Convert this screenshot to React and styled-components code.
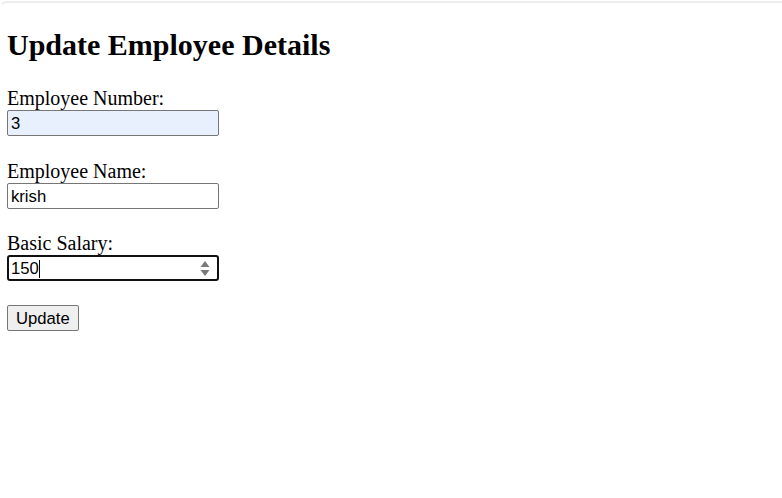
import React from "react";
import styled, { createGlobalStyle } from "styled-components";

const Global = createGlobalStyle`
  html, body { margin: 0; padding: 0; background: #ffffff; }
  body { font-family: "Liberation Serif", "Times New Roman", serif; color: #000; }
`;

const Frame = styled.div`
  margin-top: 1px;
  min-height: 497px;
  box-sizing: border-box;
  border-top: 2px solid #ececec;
  border-left: 1px solid #ffffff;
  border-top-left-radius: 7px;
  padding: 0 0 0 6px;
`;

const Title = styled.h2`
  margin: 25px 0 25px;
  font-size: 30px;
  line-height: 34px;
  font-weight: bold;
`;

const Form = styled.form`
  display: flex;
  flex-direction: column;
  align-items: flex-start;
`;

const Field = styled.div`
  display: flex;
  flex-direction: column;
  align-items: flex-start;
  margin-bottom: 23.5px;
`;

const Label = styled.label`
  font-size: 20px;
  line-height: 23px;
`;

const InputWrap = styled.div`
  position: relative;
  width: 212px;
  height: 26px;
`;

const Input = styled.input`
  box-sizing: border-box;
  width: 212px;
  height: 26px;
  margin: 0;
  padding: 2px 3px 0;
  font-family: "Liberation Sans", Arial, sans-serif;
  font-size: 16.67px;
  color: #000;
  background: ${(p) => (p.$autofill ? "#e8f0fe" : "#ffffff")};
  border: ${(p) => (p.$focused ? "2px solid #101010" : "1px solid #767676")};
  padding-left: ${(p) => (p.$focused ? "2px" : "3px")};
  border-radius: ${(p) => (p.$focused ? "3px" : "2px")};
  outline: none;
`;

const Caret = styled.span`
  position: absolute;
  left: 32px;
  top: 5px;
  width: 1px;
  height: 18px;
  background: #000;
`;

const Spinner = styled.svg`
  position: absolute;
  right: 9px;
  top: 6px;
`;

const Button = styled.button`
  box-sizing: border-box;
  height: 26px;
  margin: 0;
  padding: 2px 8px 0;
  font-family: "Liberation Sans", Arial, sans-serif;
  font-size: 16.67px;
  color: #000;
  background: #efefef;
  border: 1px solid #767676;
  border-radius: 2px;
`;

export default function App() {
  return (
    <>
      <Global />
      <Frame>
        <Title>Update Employee Details</Title>
        <Form onSubmit={(e) => e.preventDefault()}>
          <Field>
            <Label htmlFor="eno">Employee Number:</Label>
            <InputWrap>
              <Input id="eno" $autofill defaultValue="3" />
            </InputWrap>
          </Field>
          <Field>
            <Label htmlFor="ename">Employee Name:</Label>
            <InputWrap>
              <Input id="ename" defaultValue="krish" />
            </InputWrap>
          </Field>
          <Field>
            <Label htmlFor="sal">Basic Salary:</Label>
            <InputWrap>
              <Input id="sal" $focused defaultValue="150" />
              <Caret />
              <Spinner width="10" height="15" viewBox="0 0 10 15">
                <path d="M5 0 L9.5 6 L0.5 6 Z" fill="#7a7a7a" />
                <path d="M0.5 9 L9.5 9 L5 15 Z" fill="#7a7a7a" />
              </Spinner>
            </InputWrap>
          </Field>
          <Button type="submit">Update</Button>
        </Form>
      </Frame>
    </>
  );
}
